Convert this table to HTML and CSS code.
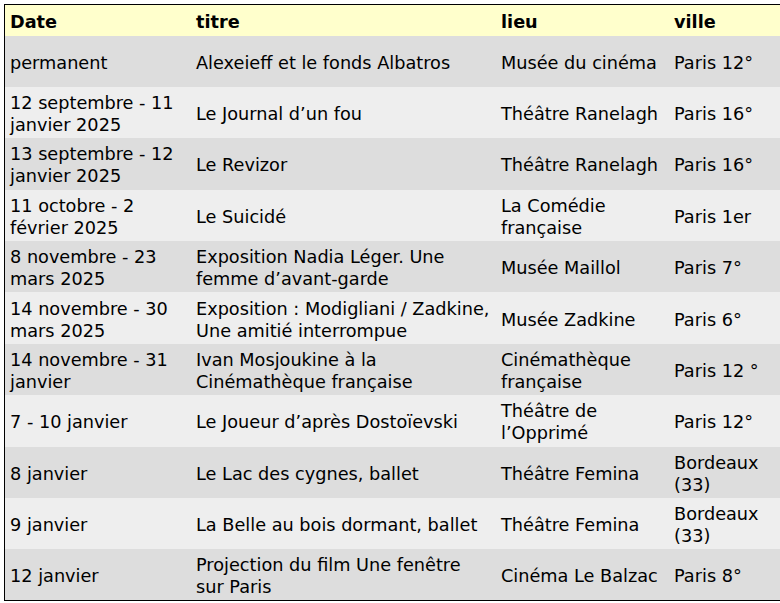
FILE: index.html
```html
<!DOCTYPE html>
<html lang="fr">
<head>
<meta charset="utf-8">
<link rel="stylesheet" href="styles.css">
</head>
<body>
<table class="agenda">
<thead>
<tr><th class="c1">Date</th><th class="c2">titre</th><th class="c3">lieu</th><th class="c4">ville</th></tr>
</thead>
<tbody>
<tr><td>permanent</td><td>Alexeieff et le fonds Albatros</td><td>Musée du cinéma</td><td>Paris 12°</td></tr>
<tr><td>12 septembre - 11 janvier 2025</td><td>Le Journal d’un fou</td><td>Théâtre Ranelagh</td><td>Paris 16°</td></tr>
<tr><td>13 septembre - 12 janvier 2025</td><td>Le Revizor</td><td>Théâtre Ranelagh</td><td>Paris 16°</td></tr>
<tr><td>11 octobre - 2 février 2025</td><td>Le Suicidé</td><td>La Comédie française</td><td>Paris 1er</td></tr>
<tr><td>8 novembre - 23 mars 2025</td><td>Exposition Nadia Léger. Une femme d’avant-garde</td><td>Musée Maillol</td><td>Paris 7°</td></tr>
<tr><td>14 novembre - 30 mars 2025</td><td>Exposition : Modigliani / Zadkine, Une amitié interrompue</td><td>Musée Zadkine</td><td>Paris 6°</td></tr>
<tr><td>14 novembre - 31 janvier</td><td>Ivan Mosjoukine à la Cinémathèque française</td><td>Cinémathèque française</td><td>Paris 12 °</td></tr>
<tr><td>7 - 10 janvier</td><td>Le Joueur d’après Dostoïevski</td><td>Théâtre de l’Opprimé</td><td>Paris 12°</td></tr>
<tr><td>8 janvier</td><td>Le Lac des cygnes, ballet</td><td>Théâtre Femina</td><td>Bordeaux (33)</td></tr>
<tr><td>9 janvier</td><td>La Belle au bois dormant, ballet</td><td>Théâtre Femina</td><td>Bordeaux (33)</td></tr>
<tr><td>12 janvier</td><td>Projection du film Une fenêtre sur Paris</td><td>Cinéma Le Balzac</td><td>Paris 8°</td></tr>
</tbody>
</table>
</body>
</html>
```
FILE: styles.css
```css
html, body {
  margin: 0;
  padding: 0;
  background: #ffffff;
}
body {
  padding: 4px;
  font-family: "DejaVu Sans", Verdana, sans-serif;
  font-size: 17.7px;
  color: #000;
}
.agenda {
  border-collapse: collapse;
  border: 1px solid #000;
  width: 777px;
  table-layout: fixed;
}
.agenda th, .agenda td {
  padding: 3px 5px 0;
  text-align: left;
  vertical-align: middle;
  line-height: 22px;
}
.agenda thead tr {
  height: 31px;
  background: #ffffcc;
}
.agenda th { font-weight: bold; }
.agenda tbody tr { height: 51.4px; }
.agenda tbody tr:nth-child(odd) { background: #dddddd; }
.agenda tbody tr:nth-child(even) { background: #eeeeee; }
.c1 { width: 176px; }
.c2 { width: 295px; }
.c3 { width: 163px; }
.c4 { width: auto; }
```
